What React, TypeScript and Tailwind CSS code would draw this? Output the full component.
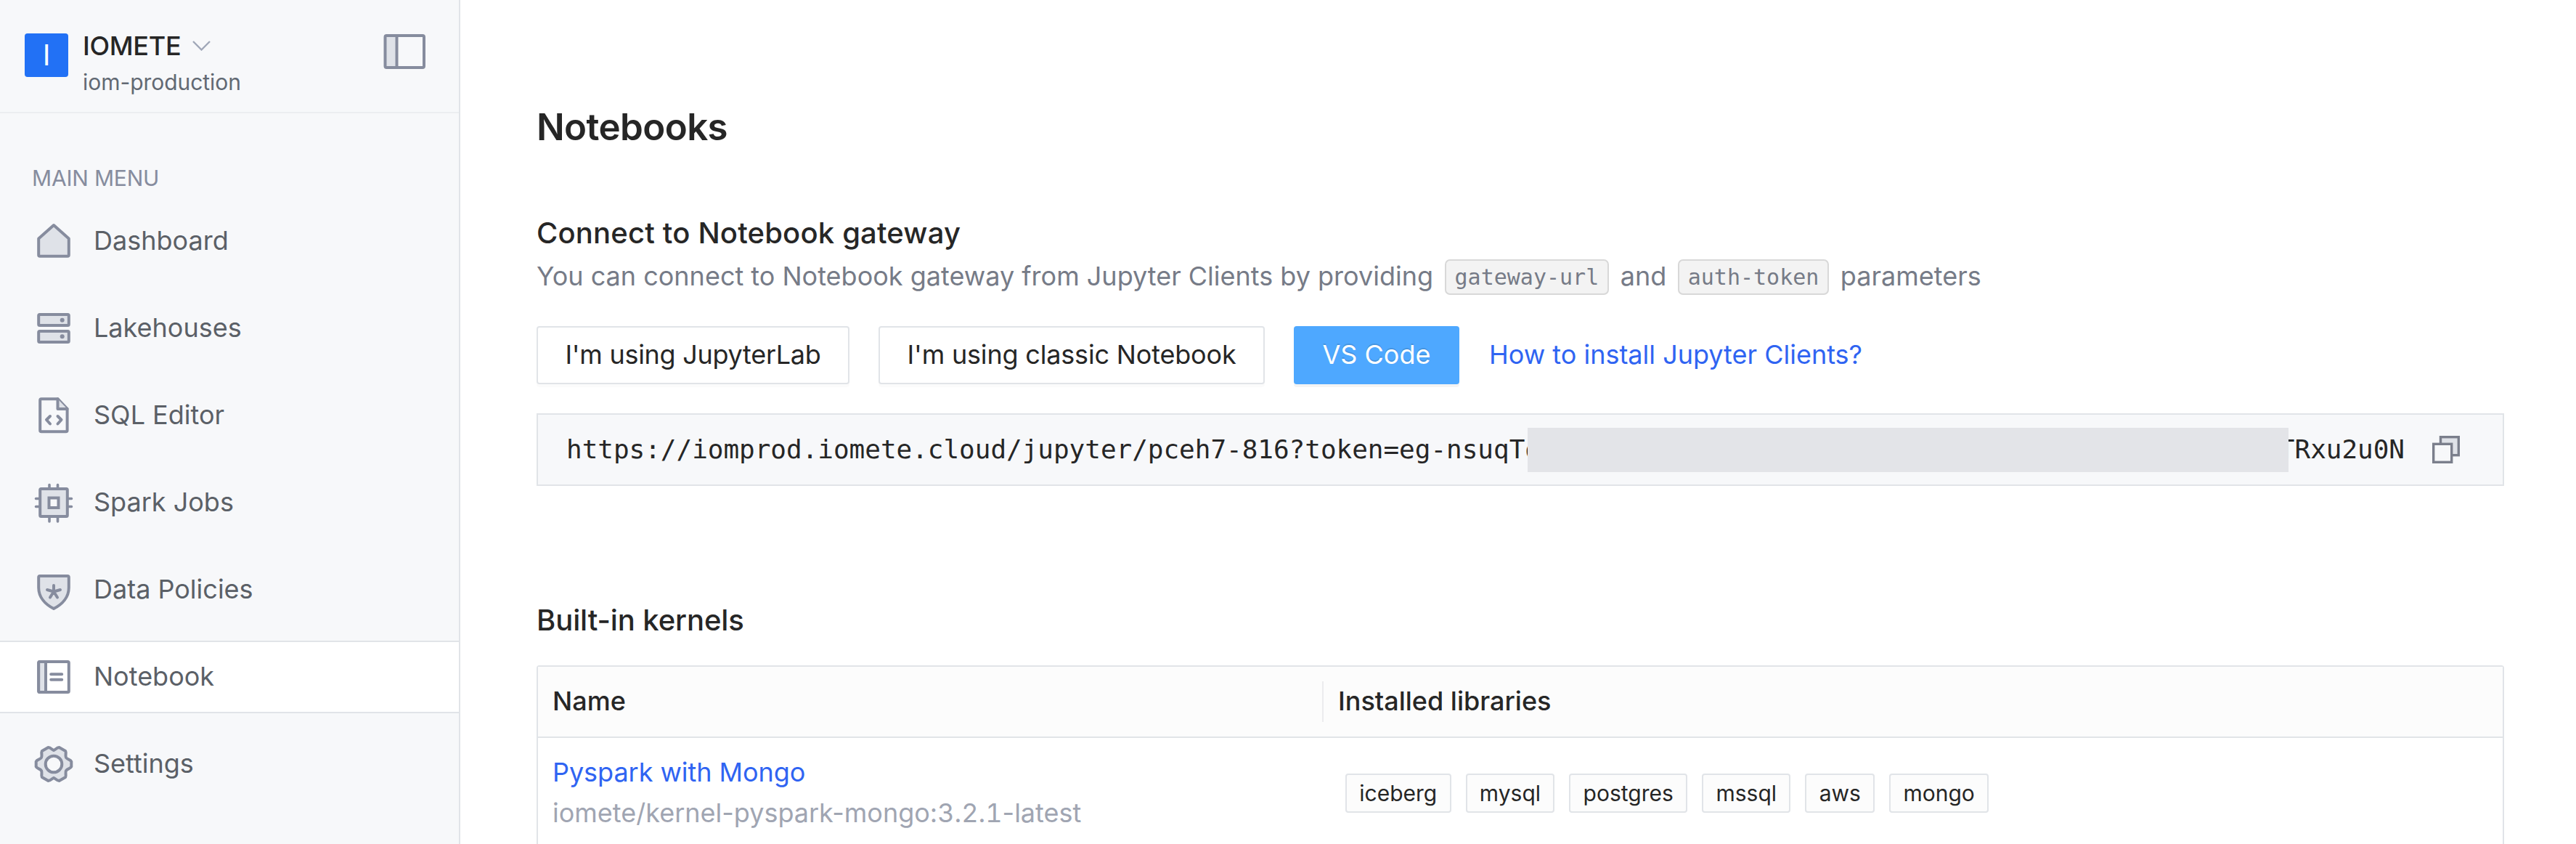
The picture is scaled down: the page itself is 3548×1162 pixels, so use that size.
import React from "react";

const STROKE = "#868c9e";
const FILL = "#dfe2e8";

function NavIcon({ children }: { children: React.ReactNode }) {
  return (
    <svg
      className="h-[60px] w-[60px] shrink-0"
      viewBox="0 0 60 60"
      fill={FILL}
      stroke={STROKE}
      strokeWidth="4"
      strokeLinejoin="round"
      strokeLinecap="round"
    >
      {children}
    </svg>
  );
}

const HomeIcon = () => (
  <NavIcon>
    <path d="M30 8 L50.8 26.5 V49 Q50.8 50.8 49 50.8 H11 Q9.2 50.8 9.2 49 V26.5 Z" />
  </NavIcon>
);

const ServersIcon = () => (
  <NavIcon>
    <rect x="9.2" y="11" width="41.6" height="15" rx="1.5" />
    <rect x="9.2" y="34" width="41.6" height="15" rx="1.5" />
    <circle cx="41.7" cy="18.7" r="3" fill={STROKE} stroke="none" />
    <circle cx="41.7" cy="41.3" r="3" fill={STROKE} stroke="none" />
  </NavIcon>
);

const SqlIcon = () => (
  <NavIcon>
    <path fill="none" d="M35.5 7.2 H13 Q11.2 7.2 11.2 9 V50.5 Q11.2 52.3 13 52.3 H46.8 Q48.6 52.3 48.6 50.5 V21 Z" />
    <path d="M35.5 7.2 V21 H48.6" />
    <path fill="none" d="M25 31 L20 36 L25 41.5 M35.5 31 L40.5 36 L35.5 41.5" />
  </NavIcon>
);

const ChipIcon = () => (
  <NavIcon>
    <path
      strokeWidth="3.6"
      d="M24 5.5 V11 M35.5 5.5 V11 M24 49 V56 M35.5 49 V56 M5.5 24.5 H11 M5.5 35.5 H11 M49 24.5 H54.5 M49 35.5 H54.5"
    />
    <rect x="11.2" y="11" width="37.6" height="38" rx="1.5" />
    <rect x="23.5" y="23.5" width="13" height="13.5" fill="#f7f8fa" strokeLinejoin="miter" />
  </NavIcon>
);

const ShieldIcon = () => (
  <NavIcon>
    <path d="M11 11 H49 Q50.8 11 50.8 13 V27 C50.8 40 42 50 30 56 C18 50 9.2 40 9.2 27 V13 Q9.2 11 11 11 Z" />
    <path fill="none" d="M30 24 V32 M21 30 L30 32.5 L39 30 M30 32.5 L25 40.5 M30 32.5 L35 40.5" />
  </NavIcon>
);

const NotebookIcon = () => (
  <NavIcon>
    <rect x="9.2" y="9" width="41.6" height="42" rx="1.5" fill="#ffffff" />
    <path d="M19 9 V51 H11 Q9.2 51 9.2 49 V11 Q9.2 9 11 9 Z" />
    <path fill="none" d="M26.2 26.2 H41.2 M26.2 33.8 H41.2" />
  </NavIcon>
);

const GearIcon = () => (
  <NavIcon>
    <path d="M30 11 C32 10.5 34 7.2 37.5 7 L46.2 12 C47.6 15 45.5 18 47 21 C48.8 24 53 23.4 54.3 26.5 V33.5 C53 36.6 48.8 36 47 39 C45.5 42 47.6 45 46.2 48 L37.5 53 C34 52.8 32 49.5 30 49 C28 49.5 26 52.8 22.5 53 L13.8 48 C12.4 45 14.5 42 13 39 C11.2 36 7 36.6 5.7 33.5 V26.5 C7 23.4 11.2 24 13 21 C14.5 18 12.4 15 13.8 12 L22.5 7 C26 7.2 28 10.5 30 11 Z" />
    <circle cx="30" cy="30" r="11.3" fill="#f7f8fa" />
  </NavIcon>
);

const NAV = [
  { label: "Dashboard", icon: HomeIcon },
  { label: "Lakehouses", icon: ServersIcon },
  { label: "SQL Editor", icon: SqlIcon },
  { label: "Spark Jobs", icon: ChipIcon },
  { label: "Data Policies", icon: ShieldIcon },
  { label: "Notebook", icon: NotebookIcon, active: true },
  { label: "Settings", icon: GearIcon },
];

const TAGS = ["iceberg", "mysql", "postgres", "mssql", "aws", "mongo"];

function Sidebar() {
  return (
    <aside className="flex w-[634px] shrink-0 flex-col border-r-2 border-[#e1e4e8] bg-[#f7f8fa]">
      <header className="flex h-[156px] shrink-0 items-start border-b-2 border-[#eceef1] pl-[34px]">
        <div className="mt-[46px] flex h-[60px] w-[60px] items-center justify-center rounded-[4px] bg-[#2271f5] text-[40px] leading-none text-white">
          I
        </div>
        <div className="mt-[38px] ml-[20px] flex-1">
          <div className="flex h-[50px] items-center gap-[16px]">
            <span className="text-[36px] leading-[50px] font-medium tracking-[-0.3px] text-[#262626]">IOMETE</span>
            <svg className="h-[14px] w-[25px]" viewBox="0 0 25 14" fill="none" stroke="#a0a7b8" strokeWidth="2.4">
              <path d="M1 1 L12.5 12.5 L24 1" />
            </svg>
          </div>
          <div className="text-[30px] leading-[50px] tracking-[-0.05px] text-[#626973]">iom-production</div>
        </div>
        <svg className="mt-[46px] mr-[45px] h-[50px] w-[60px]" viewBox="0 0 60 50" stroke="#868c9e" strokeWidth="4" fill="none">
          <rect x="4" y="3" width="15" height="44" fill={FILL} stroke="none" />
          <rect x="3.5" y="3" width="53.5" height="44" rx="2" />
          <path d="M19.5 3 V47" />
        </svg>
      </header>
      <nav className="flex flex-col pt-[69px]">
        <div className="mb-[17px] pl-[44px] text-[30px] leading-[40px] tracking-[-0.2px] text-[#868c9e]">MAIN MENU</div>
        <div className="flex flex-col gap-5">
          {NAV.map(({ label, icon: Icon, active }) => (
            <div
              key={label}
              className={
                "flex h-[100px] items-center gap-[25px] border-y-2 pl-[44px] " +
                (active ? "border-[#e1e4e8] bg-white" : "border-transparent")
              }
            >
              <Icon />
              <span className="pb-[2px] text-[36px] leading-[50px] text-[#5b6067]">{label}</span>
            </div>
          ))}
        </div>
      </nav>
    </aside>
  );
}

function Code({ children }: { children: string }) {
  return (
    <code className="mt-[3px] flex h-[49px] items-center rounded-[7px] border-2 border-[#d8d8d8] bg-[#f3f3f3] px-[11.5px] font-['DejaVu_Sans_Mono',monospace] text-[30px] leading-none">
      {children}
    </code>
  );
}

function OutlineButton({ className, children }: { className: string; children: string }) {
  return (
    <button
      className={
        "h-[80px] rounded-[4px] border-2 border-[#e1e4e8] bg-white pb-[2px] text-[36px] whitespace-nowrap text-[#262626] shadow-[0_4px_0_rgba(0,0,0,0.015)] " +
        className
      }
    >
      {children}
    </button>
  );
}

function GatewayUrl() {
  return (
    <div className="mt-[40px] flex h-[100px] items-center border-2 border-[#e1e4e8] bg-[#f7f8fa] pl-[39px] font-['DejaVu_Sans_Mono',monospace] text-[36px] leading-[60px] tracking-[-0.03px] text-[#262626]">
      <div className="w-[1324px] shrink-0 whitespace-nowrap">
        https://iomprod.iomete.cloud/jupyter/pceh7-816?token=eg-nsuqTo
      </div>
      <div className="relative z-10 h-[61px] w-[1048px] shrink-0 bg-[#e3e4e8]" />
      <div className="flex w-[160px] shrink-0 justify-end whitespace-nowrap">
        <span>TRxu2u0N</span>
      </div>
      <svg className="ml-[38px] h-[38px] w-[38px]" viewBox="0 0 38 38" stroke="#7b7f8c" strokeWidth="3.4" fill={FILL}>
        <rect x="11.5" y="1.7" width="24.8" height="25" />
        <rect x="1.7" y="11.3" width="25" height="25" fill="#f7f8fa" />
      </svg>
    </div>
  );
}

function KernelTable() {
  return (
    <div className="mt-[38px] rounded-t-[4px] border-2 border-b-0 border-[#e1e4e8]">
      <div className="flex h-[98px] items-center border-b-2 border-[#e1e4e8] bg-[#fcfcfc] text-[36px] leading-[50px] font-medium text-[#262626]">
        <div className="w-[1080px] pb-[2px] pl-[20px]">Name</div>
        <div className="h-[56px] w-[2px] bg-[#ececee]" />
        <div className="pb-[2px] pl-[20px]">Installed libraries</div>
      </div>
      <div className="flex h-[150px] items-center">
        <div className="w-[1082px] pl-[20px] text-[36px] leading-[56px]">
          <div className="tracking-[-0.05px] text-[#2f64f2]">Pyspark with Mongo</div>
          <div className="text-[#a0a5b2]">
            iomete/kernel-pyspark-mongo:<span className="tabular-nums">3.2.1</span>-latest
          </div>
        </div>
        <div className="flex gap-5 pt-[2px] pl-[30px]">
          {TAGS.map((tag) => (
            <span
              key={tag}
              className="flex h-[54px] items-center rounded-[4px] border-2 border-[#e1e4e8] bg-[#fcfcfc] px-[17.3px] text-[30px] leading-none text-[#262626]"
            >
              {tag}
            </span>
          ))}
        </div>
      </div>
    </div>
  );
}

export default function App() {
  return (
    <div className="flex h-[1162px] w-[3548px] overflow-hidden bg-white font-['Inter',sans-serif]">
      <Sidebar />
      <main className="flex-1 pt-[144px] pr-[99px] pl-[105px]">
        <h1 className="text-[51px] leading-[61px] font-semibold tracking-[-0.6px] text-[#262626]">Notebooks</h1>
        <h2 className="mt-[91px] text-[40px] leading-[49px] font-medium tracking-[0.17px] text-[#262626]">
          Connect to Notebook gateway
        </h2>
        <div className="mt-[10px] flex h-[50px] items-center gap-[16px] text-[36px] leading-[50px] whitespace-nowrap text-[#767b87]">
          <span>You can connect to Notebook gateway from Jupyter Clients by providing</span>
          <Code>gateway-url</Code>
          <span>and</span>
          <Code>auth-token</Code>
          <span>parameters</span>
        </div>
        <div className="mt-[44px] flex h-[80px] items-center gap-[40px] text-[36px]">
          <OutlineButton className="w-[431px] tracking-[-0.28px]">I'm using JupyterLab</OutlineButton>
          <OutlineButton className="w-[532px] tracking-[-0.18px]">I'm using classic Notebook</OutlineButton>
          <button className="h-[80px] w-[228px] rounded-[4px] bg-[#4ea8ff] pb-[2px] text-white shadow-[0_4px_0_rgba(0,0,0,0.045)] [text-shadow:0_-2px_0_rgba(0,0,0,0.12)]">
            VS Code
          </button>
          <a className="pb-[2px] pl-[1px] text-[#2f64f2]">How to install Jupyter Clients?</a>
        </div>
        <GatewayUrl />
        <h2 className="mt-[160px] text-[40px] leading-[49px] font-medium tracking-[-0.1px] text-[#262626]">
          Built-in kernels
        </h2>
        <KernelTable />
      </main>
    </div>
  );
}
